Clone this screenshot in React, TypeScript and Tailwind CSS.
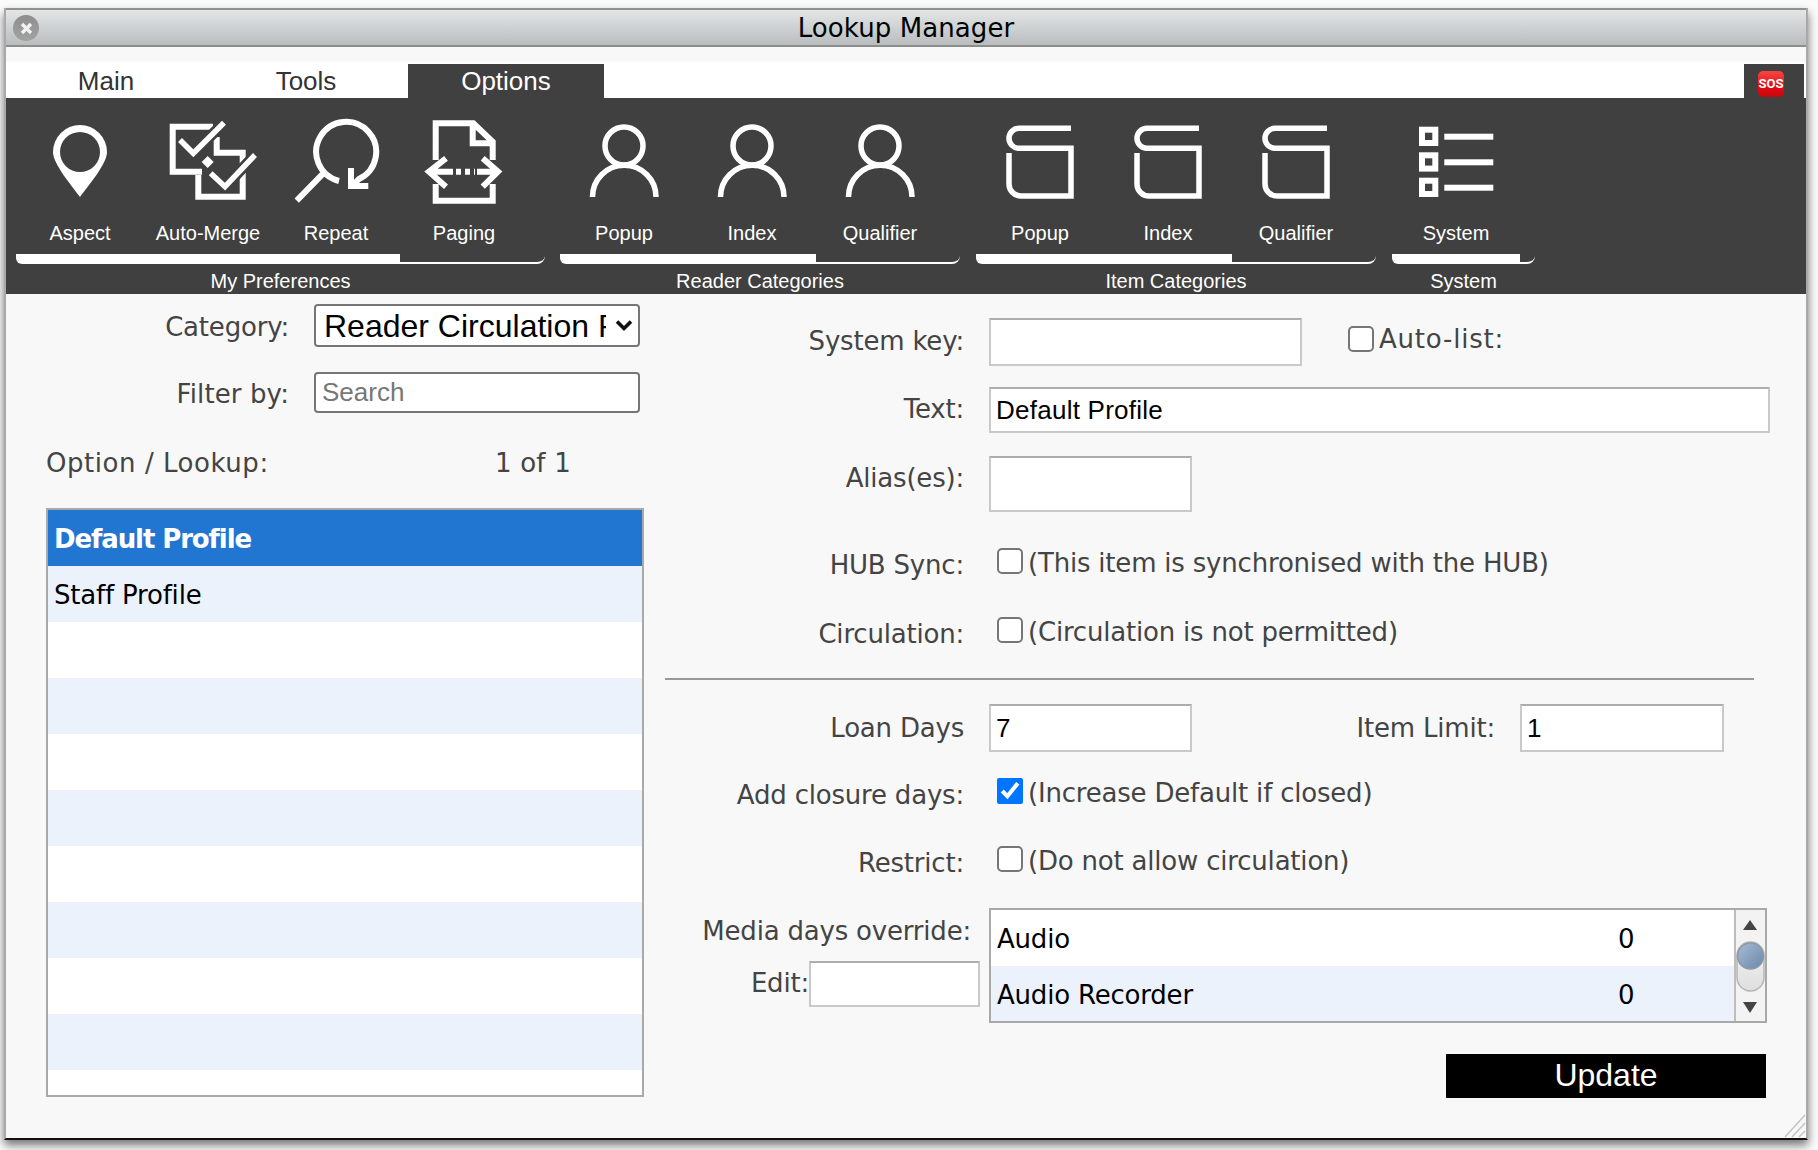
import React from "react";

const arial = "font-['Liberation_Sans',Arial,sans-serif]";

function Svg({ children }: { children: React.ReactNode }) {
  return (
    <svg width="128" height="100" viewBox="0 0 128 100" fill="none" stroke="#fff" strokeWidth="5.5">
      {children}
    </svg>
  );
}

const PinIcon = () => (
  <Svg>
    <path
      fillRule="evenodd"
      stroke="none"
      fill="#fff"
      d="M64 7A27 27 0 0 1 91 34C91 46 72 68 64 79C56 68 37 46 37 34A27 27 0 0 1 64 7ZM64 14A20 20 0 0 0 44 34A20 20 0 0 0 84 34A20 20 0 0 0 64 14Z"
    />
  </Svg>
);

const MergeIcon = () => (
  <Svg>
    <path strokeWidth="6" d="M69 8.7H28.7V53.7H58M72.7 19V34.7H98.7V78.7H54.3V57" />
    <path stroke="#404040" strokeWidth="11" d="M49.3 35.3L80 4.7M81 68.7L111 37" />
    <path strokeWidth="5.5" d="M36 22L49.3 35.3L80 4.7M66.7 55.3L81 68.7L111 37" />
    <path stroke="none" fill="#fff" d="M63.7 38L69.7 44L63.7 50L57.7 44Z" />
  </Svg>
);

const RepeatIcon = () => (
  <Svg>
    <path strokeWidth="6" d="M67 63A30 30 0 1 1 87 61L81 67" />
    <path strokeWidth="6" d="M79 50V68H96.3M51.3 55.3L24.7 82.7" />
  </Svg>
);

const PagingIcon = () => (
  <Svg>
    <path strokeWidth="6" d="M35.7 42V5.3H73.3L92.7 23.7V42M35.7 66V82.7H92.7V66M72.7 5.3V25.3H92.7" />
    <path
      strokeWidth="6"
      d="M46 40.3L29 53.7L46 68.7M82.7 40.3L98 53.7L82.7 68.7M29 53.7H53M77 53.7H98"
    />
    <path strokeWidth="6" strokeDasharray="5 4" d="M56 53.7H75" />
  </Svg>
);

const PersonIcon = () => (
  <Svg>
    <circle cx="64" cy="28" r="19" strokeWidth="5.5" />
    <path strokeWidth="5.5" d="M32.5 79A31.75 31.75 0 0 1 96 79" />
  </Svg>
);

const ItemIcon = () => (
  <Svg>
    <path d="M95 10.3H43A10 10 0 0 0 43 30.3H95V78H45A12 12 0 0 1 33 66V35" />
  </Svg>
);

const ListIcon = () => (
  <svg width="128" height="100" viewBox="0 0 128 100">
    {[8.7, 34.3, 59.7].map((y) => (
      <g key={y}>
        <rect x="27" y={y} width="19.3" height="19.3" fill="#fff" />
        <rect x="33" y={y + 6} width="7.3" height="7.3" fill="#404040" />
        <rect x="52.3" y={y + 7} width="49" height="6" fill="#fff" />
      </g>
    ))}
  </svg>
);

function ToolButton({ icon, label }: { icon: React.ReactNode; label: string }) {
  return (
    <div className="w-[128px] h-[156px] flex flex-col items-center pt-[20px]">
      {icon}
      <div className="mt-[2px] h-[26px] leading-[26px] text-[20px] text-white">{label}</div>
    </div>
  );
}

function Group({
  width,
  thick,
  title,
  children,
  className,
}: {
  width: string;
  thick: string;
  title: string;
  children: React.ReactNode;
  className?: string;
}) {
  return (
    <div className={`${width} ${className ?? ""} flex flex-col`}>
      <div className="flex h-[156px]">{children}</div>
      <div className="flex h-[10px]">
        <div className={`${thick} h-[10px] bg-white rounded-bl-[6px]`} />
        <div className="flex-1 h-[10px] border-b-2 border-white rounded-br-[8px]" />
      </div>
      <div className="h-[30px] leading-[34px] text-center text-[20px] text-white">{title}</div>
    </div>
  );
}

const inputCls =
  "bg-white border-2 border-[#c9c9c9] border-t-[#adadad] px-[5px] outline-none text-black text-[26px] tracking-[0.25px] font-['Liberation_Sans',Arial,sans-serif]";

const boxCls =
  "appearance-none w-[26px] h-[26px] m-0 shrink-0 bg-white border-2 border-[#767676] rounded-[5px]";

function Label({ children, className }: { children: React.ReactNode; className?: string }) {
  return <div className={`w-[299px] text-right shrink-0 text-[#444] ${className ?? ""}`}>{children}</div>;
}

function CheckNote({ text, checked }: { text: string; checked?: boolean }) {
  return (
    <div className="flex items-start ml-[8px]">
      {checked ? (
        <input type="checkbox" defaultChecked className="w-[26px] h-[26px] m-0 shrink-0" />
      ) : (
        <input type="checkbox" className={boxCls} />
      )}
      <span className="ml-[5px] h-[30px] leading-[30px] text-[#444] whitespace-nowrap">{text}</span>
    </div>
  );
}

function CheckRow({ label, text, checked, top }: { label: string; text: string; checked?: boolean; top: string }) {
  return (
    <div className={`flex h-[34px] ${top}`}>
      <Label className="h-[34px] leading-[34px]">{label}</Label>
      <div className="ml-[25px]">
        <CheckNote text={text} checked={checked} />
      </div>
    </div>
  );
}

export default function App() {
  const rows = Array.from({ length: 10 }, (_, i) => i);
  return (
    <div className="w-[1818px] h-[1150px] bg-[#fbfbfb] pt-[8px] pl-[4px] overflow-hidden font-['DejaVu_Sans',sans-serif] text-[26px] tracking-[-0.2px]">
      <div className="relative w-[1804px] h-[1132px] bg-[#f8f8f8] border-x-2 border-x-[#a9a9a9] border-b-2 border-b-[#111] shadow-[0_5px_9px_rgba(0,0,0,0.55)] flex flex-col">
        {/* Title bar */}
        <div className="h-[39px] shrink-0 border-t-2 border-t-[#8f9290] border-b-2 border-b-[#8b8f8c] bg-gradient-to-b from-[#e4e6e6] to-[#b9bdbf] flex items-center relative">
          <div className="ml-[7px] mt-[1px] w-[26px] h-[26px] rounded-full bg-gradient-to-b from-[#8e8e8e] to-[#a2a2a2] flex items-center justify-center">
            <svg width="13" height="13" viewBox="0 0 13 13" stroke="#f2f2f2" strokeWidth="3.4">
              <path d="M2 2L11 11M11 2L2 11" />
            </svg>
          </div>
          <div className="flex-1 mt-[2px] text-center text-black pr-[33px] leading-[35px] tracking-[0.1px]">Lookup Manager</div>
        </div>

        {/* Tabs */}
        <div className="h-[15px] shrink-0 bg-[#f8f8f8]" />
        <div className={`h-[36px] shrink-0 bg-white flex items-end text-[26px] tracking-normal ${arial}`}>
          <div className="w-[200px] h-[36px] leading-[38px] text-center text-[#333]">Main</div>
          <div className="w-[200px] h-[36px] leading-[38px] text-center text-[#333]">Tools</div>
          <div className="ml-[2px] w-[196px] h-[34px] leading-[34px] text-center text-white bg-[#404040]">Options</div>
          <div className="ml-auto mr-[2px] w-[60px] h-[34px] bg-[#404040] flex items-start pl-[14px] pt-[7px]">
            <div className="w-[26px] h-[26px] rounded-[5px] bg-gradient-to-b from-[#f64545] via-[#e80d15] to-[#c9060d] flex items-center justify-center text-white text-[13px] font-bold font-['Roboto',sans-serif]">
              SOS
            </div>
          </div>
        </div>

        {/* Toolbar */}
        <div className={`h-[196px] shrink-0 bg-[#404040] flex pl-[10px] tracking-normal ${arial}`}>
          <Group width="w-[529px]" thick="w-[384px]" title="My Preferences">
            <ToolButton icon={<PinIcon />} label="Aspect" />
            <ToolButton icon={<MergeIcon />} label="Auto-Merge" />
            <ToolButton icon={<RepeatIcon />} label="Repeat" />
            <ToolButton icon={<PagingIcon />} label="Paging" />
          </Group>
          <Group width="w-[400px]" thick="w-[256px]" title="Reader Categories" className="ml-[15px]">
            <ToolButton icon={<PersonIcon />} label="Popup" />
            <ToolButton icon={<PersonIcon />} label="Index" />
            <ToolButton icon={<PersonIcon />} label="Qualifier" />
          </Group>
          <Group width="w-[400px]" thick="w-[256px]" title="Item Categories" className="ml-[16px]">
            <ToolButton icon={<ItemIcon />} label="Popup" />
            <ToolButton icon={<ItemIcon />} label="Index" />
            <ToolButton icon={<ItemIcon />} label="Qualifier" />
          </Group>
          <Group width="w-[143px]" thick="w-[128px]" title="System" className="ml-[16px]">
            <ToolButton icon={<ListIcon />} label="System" />
          </Group>
        </div>

        {/* Body */}
        <div className="flex flex-1 min-h-0">
          {/* Left column */}
          <div className="w-[659px] shrink-0 pl-[40px] pt-[10px]">
            <div className="flex items-center h-[43px]">
              <div className="w-[243px] text-right text-[#444] mt-[4px]">Category:</div>
              <div className="relative ml-[25px] w-[326px] h-[43px] bg-white border-2 border-[#767676] rounded-[4px] pl-[8px] pr-[32px]">
                <div className={`h-[39px] leading-[41px] overflow-hidden whitespace-nowrap text-[32px] tracking-normal text-black ${arial}`}>
                  Reader Circulation Profile
                </div>
                <svg className="absolute right-[5px] top-[13px]" width="18" height="13" viewBox="0 0 18 13" fill="none" stroke="#111" strokeWidth="3.6">
                  <path d="M2 2.5L9 9.5L16 2.5" />
                </svg>
              </div>
            </div>
            <div className="flex items-center h-[41px] mt-[25px]">
              <div className="w-[243px] text-right text-[#444] mt-[4px] tracking-[0.1px]">Filter by:</div>
              <input
                placeholder="Search"
                className={`ml-[25px] w-[326px] h-[41px] bg-white border-2 border-[#767676] rounded-[4px] px-[6px] text-[26px] tracking-normal outline-none placeholder:text-[#777] ${arial}`}
              />
            </div>
            <div className="flex h-[32px] leading-[32px] mt-[34px] text-[#444]">
              <div className="w-[449px] tracking-[0.55px]">Option / Lookup:</div>
              <div className="tracking-[0.2px]">1 of 1</div>
            </div>
            <div className="mt-[29px] w-[598px] h-[589px] border-2 border-[#a9a9a9] bg-white overflow-hidden">
              {rows.map((i) => (
                <div
                  key={i}
                  className={`h-[56px] leading-[58px] px-[6px] ${
                    i === 0
                      ? "bg-[#2176d2] text-white font-bold tracking-[-1.1px]"
                      : i % 2 === 1
                        ? "bg-[#ebf2fc] text-black"
                        : "bg-white text-black"
                  }`}
                >
                  {i === 0 ? "Default Profile" : i === 1 ? "Staff Profile" : "\u00a0"}
                </div>
              ))}
            </div>
          </div>

          {/* Right column */}
          <div className="flex-1 pt-[24px]">
            <div className="flex items-center h-[48px]">
              <Label className="mb-[2px]">System key:</Label>
              <input className={`ml-[25px] w-[313px] h-[48px] ${inputCls}`} />
              <input type="checkbox" className={`ml-[46px] mb-[6px] ${boxCls}`} />
              <span className="ml-[5px] mb-[6px] text-[#444] tracking-[0.8px]">Auto-list:</span>
            </div>
            <div className="flex items-center h-[46px] mt-[21px]">
              <Label className="mb-[2px]">Text:</Label>
              <input defaultValue="Default Profile" className={`ml-[25px] w-[781px] h-[46px] ${inputCls}`} />
            </div>
            <div className="flex h-[56px] mt-[23px]">
              <Label className="h-[46px] leading-[44px]">Alias(es):</Label>
              <input className={`ml-[25px] w-[203px] h-[56px] ${inputCls}`} />
            </div>

            <CheckRow top="mt-[36px]" label="HUB Sync:" text="(This item is synchronised with the HUB)" />
            <CheckRow top="mt-[35px]" label="Circulation:" text="(Circulation is not permitted)" />

            <div className="mt-[27px] w-[1089px] h-[2px] bg-[#999]" />

            <div className="flex items-center h-[48px] mt-[24px]">
              <Label>Loan Days</Label>
              <input defaultValue="7" className={`ml-[25px] w-[203px] h-[48px] ${inputCls}`} />
              <div className="w-[303px] text-right text-[#444]">Item Limit:</div>
              <input defaultValue="1" className={`ml-[25px] w-[204px] h-[48px] ${inputCls}`} />
            </div>
            <CheckRow top="mt-[26px]" label="Add closure days:" text="(Increase Default if closed)" checked />
            <CheckRow top="mt-[34px]" label="Restrict:" text="(Do not allow circulation)" />

            <div className="flex mt-[28px]">
              <div className="w-[315px] shrink-0">
                <div className="h-[46px] leading-[46px] text-right pr-[9px] text-[#444]">Media days override:</div>
                <div className="flex items-center justify-end mt-[7px] h-[46px]">
                  <span className="text-[#444] mb-[2px]">Edit:</span>
                  <input className={`w-[171px] h-[46px] ${inputCls}`} />
                </div>
              </div>
              <div className="ml-[9px] w-[778px] h-[115px] border-2 border-[#a9a9a9] flex">
                <div className="flex-1 text-black">
                  <div className="h-[56px] bg-white flex items-center pl-[6px] pt-[2px]">
                    <span className="w-[621px]">Audio</span>
                    <span>0</span>
                  </div>
                  <div className="h-[55px] bg-[#ebf2fc] flex items-center pl-[6px] pt-[3px]">
                    <span className="w-[621px]">Audio Recorder</span>
                    <span>0</span>
                  </div>
                </div>
                <svg className="border-l-2 border-[#bdbdbd] bg-[#f3f3f3]" width="31" height="111" viewBox="0 0 29 111">
                  <defs>
                    <linearGradient id="thumb" x1="0" y1="0" x2="1" y2="1">
                      <stop offset="0" stopColor="#a9bdd5" />
                      <stop offset="1" stopColor="#6a87aa" />
                    </linearGradient>
                    <linearGradient id="cap" x1="0" y1="0" x2="0" y2="1">
                      <stop offset="0" stopColor="#f4f4f4" />
                      <stop offset="1" stopColor="#dedede" />
                    </linearGradient>
                  </defs>
                  <path d="M7 20L14 10L21 20Z" fill="#444" />
                  <path d="M7 92L14 103L21 92Z" fill="#444" />
                  <rect x="1" y="32" width="27" height="49" rx="13.5" fill="url(#cap)" stroke="#b5b5b5" strokeWidth="1.5" />
                  <circle cx="14.5" cy="46" r="13" fill="url(#thumb)" stroke="#8d98a6" strokeWidth="1.5" />
                </svg>
              </div>
            </div>

            <div
              className={`ml-[781px] mt-[31px] w-[320px] h-[44px] bg-black text-white text-center text-[32px] leading-[42px] tracking-normal ${arial}`}
            >
              Update
            </div>
          </div>
        </div>

        {/* Resize grip */}
        <svg className="absolute right-0 bottom-0" width="22" height="24" viewBox="0 0 22 24" stroke="#c4c4c4" strokeWidth="1.5">
          <path d="M1 23L21 1M8 23L21 9M15 23L21 17" />
        </svg>
      </div>
    </div>
  );
}
